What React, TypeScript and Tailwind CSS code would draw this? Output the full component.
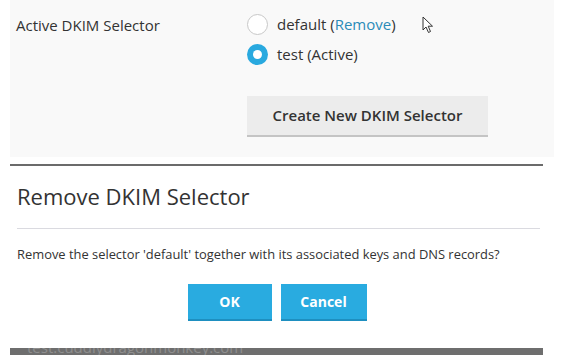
import type { ReactNode } from 'react';

const FONT = "font-['Open_Sans',_'Liberation_Sans',_sans-serif]";

function Radio({ checked, children }: { checked?: boolean; children: ReactNode }) {
  return (
    <label className="flex h-[21px] items-center gap-[9px]">
      {checked ? (
        <span className="flex h-[21px] w-[21px] items-center justify-center rounded-full bg-[#29a9df]">
          <span className="h-[9px] w-[9px] rounded-full bg-white" />
        </span>
      ) : (
        <span className="h-[21px] w-[21px] rounded-full border border-[#c8c8c8] bg-white" />
      )}
      <span className="text-[15px] leading-none text-[#333]">{children}</span>
    </label>
  );
}

function Cursor() {
  return (
    <svg
      className="absolute left-[422px] top-[16px]"
      width="13"
      height="19"
      viewBox="0 0 13 19"
    >
      <path
        d="M1 1 L1 14 L4 11 L6.5 16.5 L8.5 15.5 L6.2 10.2 L10.5 10.2 Z"
        fill="white"
        stroke="#333"
        strokeWidth="1"
        strokeLinejoin="round"
      />
    </svg>
  );
}

export default function App() {
  return (
    <div className={`relative h-[355px] w-[588px] overflow-hidden bg-white ${FONT}`}>
      <section className="ml-[10px] flex h-[157px] w-[544px] bg-[#f9f9f9]">
        <div className="w-[237px] pl-[6px] pt-[14px] text-[15px] text-[#333]">
          Active DKIM Selector
        </div>
        <div className="flex flex-col pt-[14px]">
          <div className="flex flex-col gap-[9px]">
            <Radio>
              default (<span className="text-[#2a8bb8]">Remove</span>)
            </Radio>
            <Radio checked>test (Active)</Radio>
          </div>
          <button className="mt-[31px] h-[41px] w-[241px] border-b-2 border-[#c4c4c4] bg-[#ececec] text-[15px] font-semibold text-[#333]">
            Create New DKIM Selector
          </button>
        </div>
      </section>

      <section className="ml-[10px] mt-[7px] h-[184px] w-[533px] border-t-2 border-[#6b6b6b] bg-white">
        <div className="px-[7px] pt-[16px]">
          <h2 className="text-[22px] leading-[28px] text-[#333]">Remove DKIM Selector</h2>
          <div className="mt-[18px] h-px w-[523px] bg-[#dadae0]" />
          <p className="mt-[16px] text-[12.9px] leading-[18px] text-[#333]">
            Remove the selector 'default' together with its associated keys and DNS records?
          </p>
          <div className="mt-[21px] flex justify-center gap-[9px] pl-[1px]">
            <button className="h-[37px] w-[84px] border-b-2 border-[#1e8fc0] bg-[#29abe0] text-[14px] font-bold text-white">
              OK
            </button>
            <button className="h-[37px] w-[86px] border-b-2 border-[#1e8fc0] bg-[#29abe0] text-[14px] font-bold text-white">
              Cancel
            </button>
          </div>
        </div>
      </section>

      <div className="ml-[10px] h-[8px] w-[533px] overflow-hidden bg-[#6e6e6e]">
        <div className="-mt-[10px] pl-[17px] text-[15px] leading-[18px] text-[#8f8f8f]">
          test.cuddlydragonmonkey.com
        </div>
      </div>

      <Cursor />
    </div>
  );
}
